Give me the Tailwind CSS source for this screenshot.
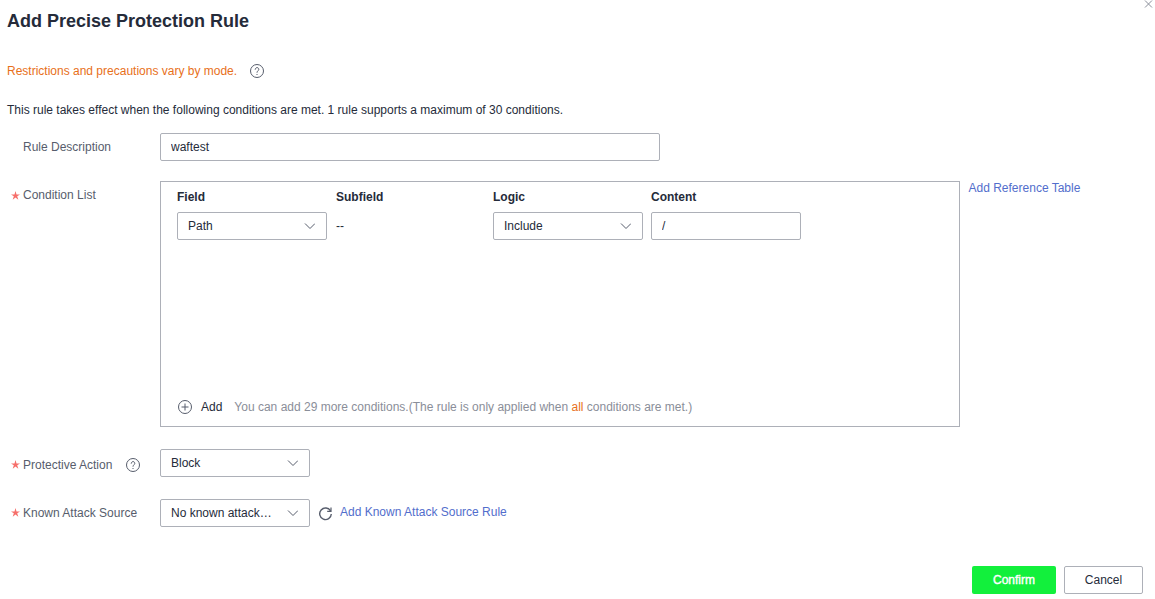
<!DOCTYPE html>
<html>
<head>
<meta charset="utf-8">
<script src="https://cdn.jsdelivr.net/npm/@tailwindcss/browser@4"></script>
</head>
<body class="bg-white">
<div class="relative w-[1155px] h-[599px] overflow-hidden px-[7px] font-['Liberation_Sans',Arial,sans-serif] text-xs text-[#252b3a]">

  <!-- close -->
  <button class="absolute right-[2px] top-0 w-[9px] h-[9px] text-[#8a8e99]">
    <svg viewBox="0 0 9 9" class="w-[9px] h-[9px]" fill="none" stroke="currentColor" stroke-width="1"><path d="M1 0.5l7 7M8 0.5l-7 7"/></svg>
  </button>

  <h2 class="h-[42px] leading-[42px] text-[18px] font-bold">Add Precise Protection Rule</h2>

  <div class="flex items-center h-[18px] mt-[20px] text-[#e8701a]">
    <span>Restrictions and precautions vary by mode.</span>
    <svg class="ml-[12px] text-[#575d6c]" width="16" height="16" viewBox="0 0 16 16" fill="none" stroke="currentColor"><circle cx="8" cy="8" r="6.5"/><path d="M6.2 6.3a1.8 1.8 0 1 1 2.7 1.6c-.6.3-.9.7-.9 1.4" stroke-linecap="round"/><path d="M8 11v1"/></svg>
  </div>

  <p class="h-[18px] leading-[18px] mt-[21px]">This rule takes effect when the following conditions are met. 1 rule supports a maximum of 30 conditions.</p>

  <!-- rule description -->
  <div class="flex items-center mt-[14px]">
    <label class="w-[153px] pl-[16px] text-[#575d6c]">Rule Description</label>
    <input class="w-[500px] h-[28px] px-[10px] border border-[#adb0b8] rounded-[2px] text-xs text-[#252b3a] outline-none" value="waftest">
  </div>

  <!-- condition list -->
  <div class="flex items-start mt-[20px]">
    <label class="flex items-center w-[153px] h-[18px] mt-[5px] text-[#575d6c]">
      <span class="w-[16px] pl-[3.5px]"><svg width="9" height="9" viewBox="0 0 8 8" fill="#f66f6a"><path d="M4 0l.9 3 3.100 0-2.500 1.700 1 3.100L4 5.800 1.500 7.800l1-3.100L0 3l3.100 0z"/></svg></span>Condition List
    </label>
    <div class="flex flex-col justify-between w-[800px] h-[246px] border border-[#adb0b8] pl-[16px] pt-[7px] pb-[10px]">
      <div>
        <div class="flex h-[16px] leading-[16px] font-bold">
          <span class="w-[159px]">Field</span>
          <span class="w-[157px]">Subfield</span>
          <span class="w-[158px]">Logic</span>
          <span class="w-[150px]">Content</span>
        </div>
        <div class="flex items-center mt-[7px]">
          <div class="w-[159px]">
            <div class="flex items-center justify-between w-[150px] h-[28px] pl-[10px] pr-[11px] border border-[#adb0b8] rounded-[2px]">
              <span>Path</span>
              <svg width="12" height="12" viewBox="0 0 12 12" fill="none" stroke="#575d6c"><path d="M2 3.500l5 5 5-5"/></svg>
            </div>
          </div>
          <span class="w-[157px]">--</span>
          <div class="w-[158px]">
            <div class="flex items-center justify-between w-[150px] h-[28px] pl-[10px] pr-[11px] border border-[#adb0b8] rounded-[2px]">
              <span>Include</span>
              <svg width="12" height="12" viewBox="0 0 12 12" fill="none" stroke="#575d6c"><path d="M2 3.500l5 5 5-5"/></svg>
            </div>
          </div>
          <input class="w-[150px] h-[28px] px-[10px] border border-[#adb0b8] rounded-[2px] text-xs text-[#252b3a] outline-none" value="/">
        </div>
      </div>
      <div class="flex items-center h-[18px]">
        <svg class="text-[#575d6c]" width="16" height="16" viewBox="0 0 16 16" fill="none" stroke="currentColor"><circle cx="8" cy="8" r="6.5"/><path d="M8 4.500v7M4.500 8h7"/></svg>
        <span class="ml-[8px]">Add</span>
        <span class="ml-[12px] text-[#8a8e99]">You can add 29 more conditions.(The rule is only applied when <span class="text-[#e8701a]">all</span> conditions are met.)</span>
      </div>
    </div>
    <a class="ml-[8.500px] mt-[-1px] text-[#526ecc]">Add Reference Table</a>
  </div>

  <!-- protective action -->
  <div class="flex items-center mt-[22px]">
    <label class="flex items-center w-[153px] h-[18px] mt-[3px] text-[#575d6c]">
      <span class="w-[16px] pl-[3.5px]"><svg width="9" height="9" viewBox="0 0 8 8" fill="#f66f6a"><path d="M4 0l.9 3 3.100 0-2.500 1.700 1 3.100L4 5.800 1.500 7.800l1-3.100L0 3l3.100 0z"/></svg></span>Protective Action
      <svg class="ml-[13px]" width="16" height="16" viewBox="0 0 16 16" fill="none" stroke="currentColor"><circle cx="8" cy="8" r="6.5"/><path d="M6.2 6.3a1.8 1.8 0 1 1 2.7 1.6c-.6.3-.9.7-.9 1.4" stroke-linecap="round"/><path d="M8 11v1"/></svg>
    </label>
    <div class="flex items-center justify-between w-[150px] h-[28px] pl-[10px] pr-[11px] border border-[#adb0b8] rounded-[2px]">
      <span>Block</span>
      <svg width="12" height="12" viewBox="0 0 12 12" fill="none" stroke="#575d6c"><path d="M2 3.500l5 5 5-5"/></svg>
    </div>
  </div>

  <!-- known attack source -->
  <div class="flex items-center mt-[22px]">
    <label class="flex items-center w-[153px] h-[18px] mt-[-1px] text-[#575d6c]">
      <span class="w-[16px] pl-[3.5px]"><svg width="9" height="9" viewBox="0 0 8 8" fill="#f66f6a"><path d="M4 0l.9 3 3.100 0-2.500 1.700 1 3.100L4 5.800 1.500 7.800l1-3.100L0 3l3.100 0z"/></svg></span>Known Attack Source
    </label>
    <div class="flex items-center justify-between w-[150px] h-[28px] pl-[10px] pr-[11px] border border-[#adb0b8] rounded-[2px]">
      <span>No known attack…</span>
      <svg width="12" height="12" viewBox="0 0 12 12" fill="none" stroke="#575d6c"><path d="M2 3.500l5 5 5-5"/></svg>
    </div>
    <svg class="ml-[8px] text-[#575d6c]" width="15" height="15" viewBox="0 0 15 15" fill="none" stroke="currentColor" stroke-width="1.4"><path d="M12.600 5A5.800 5.800 0 1 0 13.300 8"/><path d="M13 1.500V5.300H9.200" stroke-width="1.200"/></svg>
    <a class="ml-[7px] mt-[-2px] text-[#526ecc]">Add Known Attack Source Rule</a>
  </div>

  <!-- footer -->
  <div class="flex justify-end gap-[8px] mt-[39px] pr-[5px]">
    <button class="w-[84px] h-[28px] rounded-[2px] bg-[#12f03c] text-white text-xs [-webkit-text-stroke:0.4px_white]">Confirm</button>
    <button class="w-[79px] h-[28px] rounded-[2px] border border-[#adb0b8] text-xs">Cancel</button>
  </div>
</div>
</body>
</html>
